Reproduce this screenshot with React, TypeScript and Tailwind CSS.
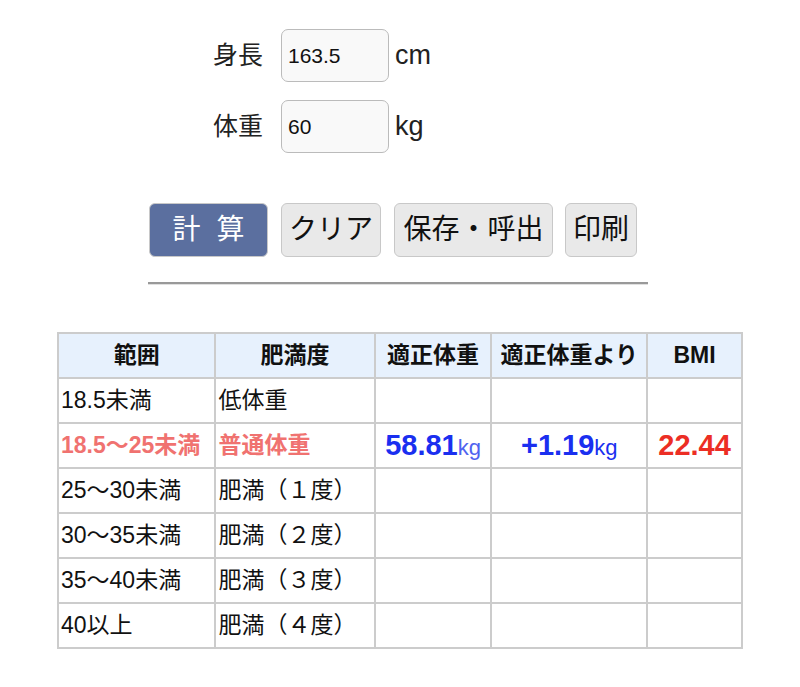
import React from "react";

const FONT = { fontFamily: '"Liberation Sans", "Noto Sans CJK JP", sans-serif' };

const rows = [
  ["18.5未満", "低体重"],
  ["25〜30未満", "肥満（１度）"],
  ["30〜35未満", "肥満（２度）"],
  ["35〜40未満", "肥満（３度）"],
  ["40以上", "肥満（４度）"],
];

export default function App() {
  const td = "border-2 border-[#cccccc] px-[2px] h-[45px] text-[23px] text-[#111] leading-none";
  const th = "border-2 border-[#cccccc] bg-[#e7f1fd] h-[45px] text-[23px] font-bold text-[#111] text-center leading-none";
  return (
    <div className="w-[800px] h-[687px] bg-white" style={FONT}>
      <div className="pt-[29px] pl-[213px] flex flex-col gap-[18px]">
        <div className="flex items-center">
          <span className="text-[25px] text-[#222] w-[68px]">身長</span>
          <div className="w-[108px] h-[53px] rounded-[7px] border border-[#bbbbbb] bg-[#f9f9f9] flex items-center pl-[6px] text-[21px] text-[#111]">163.5</div>
          <span className="ml-[6px] text-[27px] text-[#222]">cm</span>
        </div>
        <div className="flex items-center">
          <span className="text-[25px] text-[#222] w-[68px]">体重</span>
          <div className="w-[108px] h-[53px] rounded-[7px] border border-[#bbbbbb] bg-[#f9f9f9] flex items-center pl-[6px] text-[21px] text-[#111]">60</div>
          <span className="ml-[6px] text-[27px] text-[#222]">kg</span>
        </div>
      </div>

      <div className="mt-[50px] pl-[149px] flex gap-[13px]">
        <div className="w-[119px] h-[54px] rounded-[6px] border border-[#c8c8c8] bg-[#5b6f9f] text-white text-[28px] flex items-center justify-center gap-[16px] leading-none">
          <span>計</span>
          <span>算</span>
        </div>
        <div className="w-[100px] h-[54px] rounded-[6px] border border-[#c8c8c8] bg-[#e9e9e9] text-[#111] text-[28px] flex items-center justify-center leading-none">クリア</div>
        <div className="w-[159px] h-[54px] rounded-[6px] border border-[#c8c8c8] bg-[#e9e9e9] text-[#111] text-[28px] flex items-center justify-center leading-none">保存・呼出</div>
        <div className="ml-[-1px] w-[72px] h-[54px] rounded-[6px] border border-[#c8c8c8] bg-[#e9e9e9] text-[#111] text-[28px] flex items-center justify-center leading-none">印刷</div>
      </div>

      <div className="mt-[25px] ml-[148px] w-[500px] border-t-2 border-t-[#999999] border-b border-b-[#e0e0e0]"></div>

      <table className="mt-[47px] ml-[57px] border-collapse border-2 border-[#cccccc]" style={{ width: 686 }}>
        <colgroup>
          <col style={{ width: 158 }} />
          <col style={{ width: 160 }} />
          <col style={{ width: 117 }} />
          <col style={{ width: 156 }} />
          <col style={{ width: 95 }} />
        </colgroup>
        <thead>
          <tr>
            <th className={th}>範囲</th>
            <th className={th}>肥満度</th>
            <th className={th}>適正体重</th>
            <th className={th}>適正体重より</th>
            <th className={th}>BMI</th>
          </tr>
        </thead>
        <tbody>
          <tr>
            <td className={td}>{rows[0][0]}</td>
            <td className={td}>{rows[0][1]}</td>
            <td className={td}></td>
            <td className={td}></td>
            <td className={td}></td>
          </tr>
          <tr>
            <td className={td + " font-bold !text-[#f07270]"}>18.5〜25未満</td>
            <td className={td + " font-bold !text-[#f07270]"}>普通体重</td>
            <td className={td + " text-center whitespace-nowrap"}>
              <span className="text-[29px] font-bold text-[#1a2ff0]">58.81</span>
              <span className="text-[22px] text-[#4f63f0]">kg</span>
            </td>
            <td className={td + " text-center whitespace-nowrap"}>
              <span className="text-[29px] font-bold text-[#1a2ff0]">+1.19</span>
              <span className="text-[22px] text-[#1a2ff0]">kg</span>
            </td>
            <td className={td + " text-center"}>
              <span className="text-[29px] font-bold text-[#ec2e24]">22.44</span>
            </td>
          </tr>
          {rows.slice(1).map((r, i) => (
            <tr key={i}>
              <td className={td}>{r[0]}</td>
              <td className={td}>{r[1]}</td>
              <td className={td}></td>
              <td className={td}></td>
              <td className={td}></td>
            </tr>
          ))}
        </tbody>
      </table>
    </div>
  );
}
